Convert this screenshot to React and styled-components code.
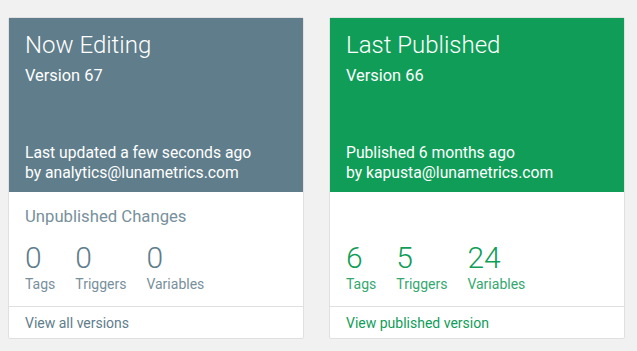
import React from "react";
import styled, { createGlobalStyle } from "styled-components";

const GlobalStyle = createGlobalStyle`
  body {
    margin: 0;
    background-color: #f1f1f1;
    font-family: Roboto, "Liberation Sans", Arial, sans-serif;
  }
  * {
    box-sizing: border-box;
  }
`;

const Page = styled.div`
  display: flex;
  gap: 25px;
  padding: 17px 0 0 8px;
`;
const Card = styled.div`
  width: 296px;
  background-color: #fff;
  border: 1px solid #e0e0e0;
  border-radius: 2px;
  display: flex;
  flex-direction: column;
`;
const Header = styled.div`
  height: 174px;
  background-color: ${(p) => p.color};
  color: #fff;
  padding: 12px 16px 9px;
  display: flex;
  flex-direction: column;
`;
const Title = styled.div`
  font-size: 24px;
  font-weight: 300;
  line-height: 30px;
`;
const Version = styled.div`
  font-size: 16.4px;
  line-height: 20px;
  margin-top: 6px;
`;
const Updated = styled.div`
  margin-top: auto;
  font-size: 15.7px;
  line-height: 20px;
`;
const Body = styled.div`
  height: 115px;
  padding: 15px 16px 0;
  border-bottom: 1px solid #e0e0e0;
`;
const Subtitle = styled.div`
  font-size: 16.7px;
  line-height: 20px;
  height: 20px;
  color: #78909c;
`;
const Stats = styled.div`
  display: flex;
  gap: 20px;
  margin-top: 15px;
`;
const Stat = styled.div`
  display: flex;
  flex-direction: column;
`;
const Count = styled.div`
  font-size: 30px;
  font-weight: 300;
  line-height: 32px;
  color: ${(p) => p.color};
`;
const Label = styled.div`
  font-size: 14px;
  line-height: 18px;
  margin-top: 1px;
  color: ${(p) => p.color};
`;
const Footer = styled.a`
  display: block;
  padding: 7px 16px 6px;
  font-size: 14px;
  line-height: 18px;
  color: ${(p) => p.color};
  text-decoration: none;
  cursor: pointer;
`;

const cards = [
  {
    title: "Now Editing",
    version: "Version 67",
    lines: ["Last updated a few seconds ago", "by analytics@lunametrics.com"],
    header: "#607d8b",
    count: "#607d8b",
    label: "#78909c",
    link: "#607d8b",
    subtitle: "Unpublished Changes",
    stats: [
      ["0", "Tags"],
      ["0", "Triggers"],
      ["0", "Variables"],
    ],
    footer: "View all versions",
  },
  {
    title: "Last Published",
    version: "Version 66",
    lines: ["Published 6 months ago", "by kapusta@lunametrics.com"],
    header: "#0f9d58",
    count: "#0f9d58",
    label: "#34a86f",
    link: "#0f9d58",
    subtitle: "",
    stats: [
      ["6", "Tags"],
      ["5", "Triggers"],
      ["24", "Variables"],
    ],
    footer: "View published version",
  },
];

export default function App() {
  return (
    <>
      <GlobalStyle />
      <Page>
        {cards.map((c) => (
          <Card key={c.title}>
            <Header color={c.header}>
              <Title>{c.title}</Title>
              <Version>{c.version}</Version>
              <Updated>
                {c.lines[0]}
                <br />
                {c.lines[1]}
              </Updated>
            </Header>
            <Body>
              <Subtitle>{c.subtitle}</Subtitle>
              <Stats>
                {c.stats.map(([n, l]) => (
                  <Stat key={l}>
                    <Count color={c.count}>{n}</Count>
                    <Label color={c.label}>{l}</Label>
                  </Stat>
                ))}
              </Stats>
            </Body>
            <Footer color={c.link}>{c.footer}</Footer>
          </Card>
        ))}
      </Page>
    </>
  );
}
